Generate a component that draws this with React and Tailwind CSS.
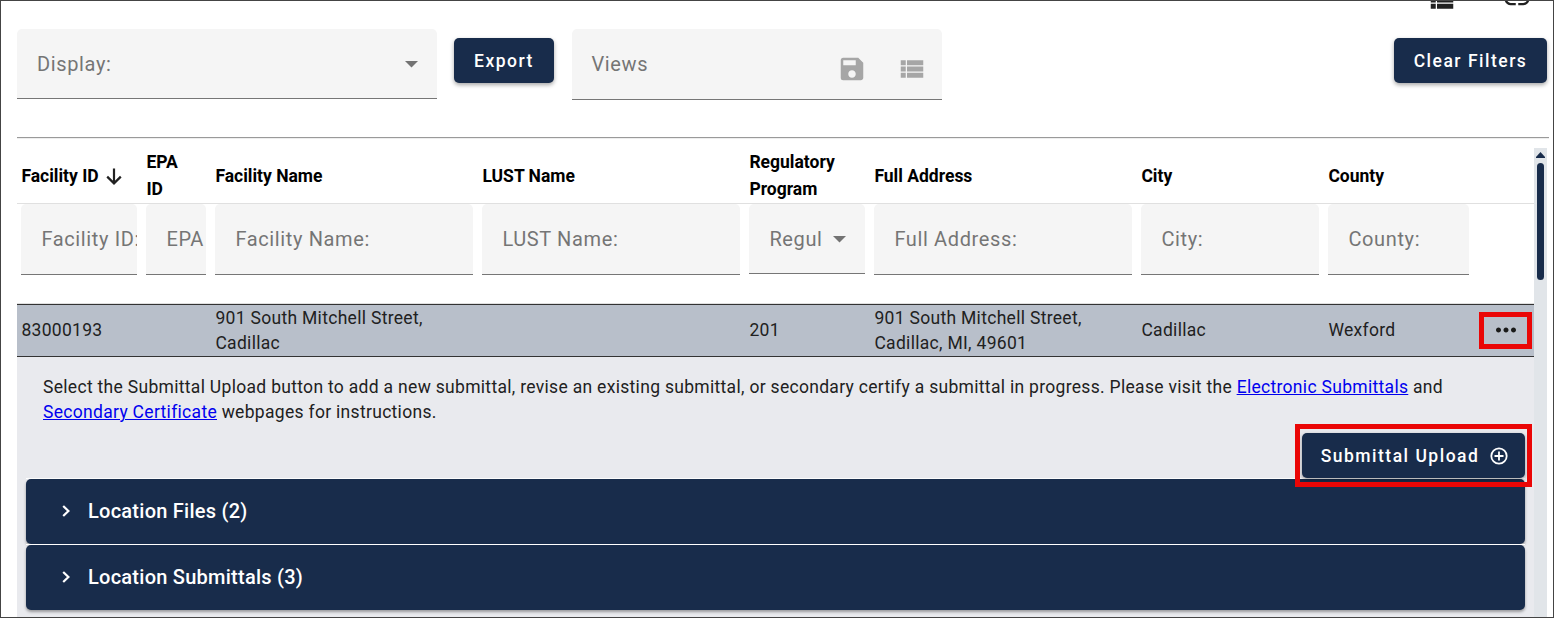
import { MdLink, MdMoreHoriz, MdSave, MdViewList } from 'react-icons/md';

const COLUMNS = [
  { header: 'Facility ID', label: 'Facility ID:', value: '83000193', sorted: true },
  { header: 'EPA\nID', label: 'EPA ID:', value: '', twoLine: true },
  { header: 'Facility Name', label: 'Facility Name:', value: '901 South Mitchell Street, Cadillac' },
  { header: 'LUST Name', label: 'LUST Name:', value: '' },
  { header: 'Regulatory\nProgram', label: 'Regul', value: '201', select: true, twoLine: true },
  { header: 'Full Address', label: 'Full Address:', value: '901 South Mitchell Street, Cadillac, MI, 49601' },
  { header: 'City', label: 'City:', value: 'Cadillac' },
  { header: 'County', label: 'County:', value: 'Wexford' },
];

const GRID = 'grid grid-cols-[125px_69px_267px_267px_125px_267px_187px_150px_1fr]';

function Caret() {
  return (
    <svg className="mt-[2px] h-[7px] w-[13px] shrink-0" viewBox="0 0 13 7">
      <path d="M0 0h13L6.5 6.5z" fill="#737373" />
    </svg>
  );
}

function SortArrow() {
  return (
    <svg className="ml-[7px] h-[17px] w-4 shrink-0" viewBox="0 0 16 17" fill="none" stroke="#212121" strokeWidth="2.2">
      <path d="M8 0.5v14.5M1.2 8.6L8 15.4l6.8-6.8" />
    </svg>
  );
}

function Chevron() {
  return (
    <svg className="mr-[17px] ml-[7px] h-3 w-[9px] shrink-0" viewBox="0 0 9 12" fill="none" stroke="currentColor" strokeWidth="2.2">
      <path d="M1.2 1l5.2 5-5.2 5" />
    </svg>
  );
}

function PlusCircle() {
  return (
    <svg className="-mt-[2px] size-[18px] shrink-0" viewBox="0 0 18 18" fill="none" stroke="currentColor" strokeWidth="1.8">
      <circle cx="9" cy="9" r="7.7" />
      <path d="M9 4.5v9M4.5 9h9" />
    </svg>
  );
}

function Button({ children, className }) {
  return (
    <button
      className={`flex h-[45px] items-center justify-center rounded-[5px] bg-[#182c4b] pt-[2px] text-[17.5px] font-medium tracking-[1.5px] whitespace-nowrap text-white shadow-[0_2px_4px_rgba(0,0,0,0.35)] ${className}`}
    >
      {children}
    </button>
  );
}

function FilterField({ label, select }) {
  return (
    <div
      className={`flex items-center overflow-hidden rounded-t-[5px] border-b border-[#767676] bg-[#f5f5f5] pl-[20.4px] text-xl tracking-[0.625px] whitespace-nowrap text-[#757575] ${
        select ? 'h-[70px] justify-between pr-[19.5px]' : 'h-[71px]'
      }`}
    >
      <span>{label}</span>
      {select && <Caret />}
    </div>
  );
}

function Panel({ title }) {
  return (
    <div className="flex h-[65px] items-center rounded-[5px] bg-[#182c4b] pb-px pl-[29px] text-xl font-medium tracking-[0.25px] text-white shadow-[0_2px_3px_rgba(0,0,0,0.35)]">
      <Chevron />
      {title}
    </div>
  );
}

function Toolbar() {
  return (
    <div className="flex h-[108px] items-start pr-[6px]">
      <div className="flex h-[70px] w-[420px] items-center justify-between rounded-t-[5px] border-b border-[#767676] bg-[#f5f5f5] pr-[19.5px] pl-5 text-xl tracking-[0.625px] text-[#757575]">
        Display:
        <Caret />
      </div>
      <Button className="mt-[9px] ml-[17px] w-[100px]">Export</Button>
      <div className="ml-[18px] flex h-[71px] w-[370px] items-center rounded-t-[5px] border-b border-[#767676] bg-[#f5f5f5] pl-[19.5px] text-xl tracking-[0.625px] text-[#757575]">
        Views
        <div className="mt-[9px] mr-[15.5px] ml-auto flex gap-[30px] text-[#a6a6a6]">
          <MdSave className="size-[30px]" />
          <MdViewList className="size-[30px]" />
        </div>
      </div>
      <Button className="mt-[9px] ml-auto w-[153px]">Clear Filters</Button>
    </div>
  );
}

export default function App() {
  return (
    <div className="h-[618px] w-[1554px] overflow-hidden border border-[#444] bg-white font-[Roboto,sans-serif] text-[#212121]">
      {/* Bottom edge of the icon bar above */}
      <div className="flex h-7 justify-end gap-[45px] overflow-hidden pr-[21px]">
        <MdViewList className="-mt-[16px] size-[30px]" />
        <MdLink className="-mt-[17px] size-[30px]" />
      </div>

      <div className="pl-4">
        <Toolbar />
        <div className="mr-1 h-[2px] border-t border-[#9a9a9a] bg-[#eee]" />

        <div className="mr-[6px] flex h-[478px]">
          <div className="w-[1517px] shrink-0">
            <div className={`${GRID} h-[65px] border-b border-[#e0e0e0] pt-[9px]`}>
              {COLUMNS.map((col) => (
                <div
                  key={col.header}
                  className={`flex items-center pl-[4.4px] text-[17.5px] leading-[27px] font-bold whitespace-pre-line text-black ${
                    col.twoLine ? '' : 'pt-[2px]'
                  }`}
                >
                  {col.header}
                  {col.sorted && <SortArrow />}
                </div>
              ))}
            </div>

            <div className={`${GRID} h-[100px] border-b border-[#e0e0e0]`}>
              {COLUMNS.map((col) => (
                <div key={col.header} className="pr-[5px] pl-1">
                  <FilterField label={col.label} select={col.select} />
                </div>
              ))}
            </div>

            <div className={`${GRID} h-[53px] border-y border-[#333] bg-[#b8bfca]`}>
              {COLUMNS.map((col) => (
                <div key={col.header} className="flex items-center pr-[5px] pl-[4.4px] text-[17.5px] leading-[25px] tracking-[0.305px]">
                  {col.value}
                </div>
              ))}
              <div className="relative flex items-center justify-center pb-px pl-1">
                <MdMoreHoriz className="size-[30px] text-[#1a1a1a]" />
                <div className="absolute top-[7px] right-[2px] h-[37px] w-[53px] border-5 border-[#ea0606]" />
              </div>
            </div>

            <div className="h-[260px] bg-[#e9eaee] px-[9px] pt-[18px]">
              <p className="pl-[17px] text-[17.5px] leading-[25px] tracking-[0.305px]">
                Select the Submittal Upload button to add a new submittal, revise an existing submittal, or secondary certify a submittal in progress. Please visit the{' '}
                <a className="text-[#0000ee] underline">Electronic Submittals</a> and
                <br />
                <a className="text-[#0000ee] underline">Secondary Certificate</a> webpages for instructions.
              </p>
              <div className="relative z-10 mt-2 flex justify-end">
                <Button className="w-[223px] gap-[11px] pl-[2px]">
                  Submittal Upload
                  <PlusCircle />
                </Button>
                <div className="absolute -top-[9px] -right-[7px] h-[63px] w-[237px] border-5 border-[#ea0606]" />
              </div>
              <div className="border-t border-white">
                <Panel title="Location Files (2)" />
                <div className="relative h-px bg-white" />
                <Panel title="Location Submittals (3)" />
              </div>
            </div>
          </div>

          {/* Scrollbar */}
          <div className="mt-[9px] flex w-[13px] flex-col items-center bg-[#e1e5e9] pt-1">
            <svg className="h-[6px] w-[9px]" viewBox="0 0 9 6">
              <path d="M4.5 0L9 5v1H0V5z" fill="#182c4b" />
            </svg>
            <div className="mt-[5px] h-[117px] w-[7px] rounded-full bg-[#182c4b]" />
          </div>
        </div>
      </div>
    </div>
  );
}
